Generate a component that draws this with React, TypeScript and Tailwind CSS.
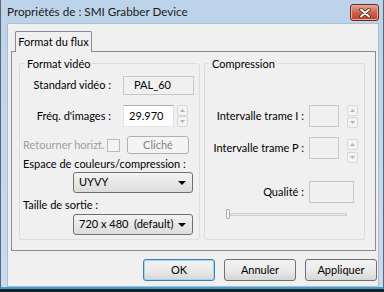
import React from 'react';

function Spin({ gap = 0 }: { gap?: number }) {
  return (
    <div className='flex flex-col' style={{ gap }}>
      {['up', 'down'].map((d) => (
        <div
          key={d}
          className='w-[11px] h-[11px] border border-[#d9d9d9] bg-[#f4f4f4] rounded-[2px] flex items-center justify-center'
        >
          <svg width='5' height='3' viewBox='0 0 5 3'>
            {d === 'up' ? <path d='M0 3 L2.5 0 L5 3 Z' fill='#b4b4b4' /> : <path d='M0 0 L2.5 3 L5 0 Z' fill='#b4b4b4' />}
          </svg>
        </div>
      ))}
    </div>
  );
}

function Select({ value }: { value: string }) {
  return (
    <div className='w-[120px] h-[21px] ml-[53px] border border-[#707070] rounded-[3px] bg-gradient-to-b from-[#f3f3f3] to-[#dcdcdc] flex items-center justify-between pl-[5px] pr-[6px] text-black whitespace-pre'>
      <span>{value}</span>
      <svg width='8' height='4' viewBox='0 0 8 4'>
        <path d='M0 0 L8 0 L4 4 Z' fill='#000' />
      </svg>
    </div>
  );
}

function Button({ label, isDefault }: { label: string; isDefault?: boolean }) {
  return (
    <div
      className={
        'w-[72px] h-[22px] rounded-[3px] border flex items-center justify-center text-black bg-gradient-to-b from-[#f2f2f2] via-[#ebebeb] to-[#d6d6d6] ' +
        (isDefault ? 'border-[#3c7fb1] shadow-[inset_0_0_0_1px_#9fd7f3]' : 'border-[#707070]')
      }
    >
      {label}
    </div>
  );
}

function Group({ title, width, children }: { title: string; width: number; children: React.ReactNode }) {
  return (
    <fieldset className='border border-[#d5dfe5] rounded-[3px] h-[184px] px-0' style={{ width }}>
      <legend className='ml-[5px] px-[2px] leading-[15px] text-black'>{title}</legend>
      {children}
    </fieldset>
  );
}

export default function App() {
  return (
    <div className="w-[384px] h-[292px] bg-[#1b1f24] overflow-hidden text-[11px] whitespace-nowrap font-['Lato','Liberation_Sans',sans-serif]">
      <div className='h-[289px] flex flex-col bg-gradient-to-b from-[#bdd3ea] to-[#c9dbee] border-l border-r border-[#56687a] border-b-[2px] border-b-[#3ba3d4]'>
        {/* title bar */}
        <div className='h-[23px] flex items-center pl-[6px] pr-[4px]'>
          <span className='text-[#1a1a1a] text-[11.7px] mt-[1px]'>Propriétés de : SMI Grabber Device</span>
          <div className='ml-auto mt-[2px] w-[29px] h-[17px] rounded-[3px] border border-[#6b2a20] bg-gradient-to-b from-[#e4a394] via-[#d0624d] to-[#c13e25] flex items-center justify-center shadow-[inset_0_0_0_1px_#e9a99b]'>
            <svg width='12' height='10' viewBox='0 0 12 10'>
              <path d='M2 1.5 L10 8.5 M10 1.5 L2 8.5' stroke='#3a1a14' strokeWidth='3.4' strokeLinecap='round' />
              <path d='M2 1.5 L10 8.5 M10 1.5 L2 8.5' stroke='#fff' strokeWidth='2' strokeLinecap='round' />
            </svg>
          </div>
        </div>

        {/* client area */}
        <div className='flex-1 ml-[6px] mr-[4px] bg-[#f0f0f0] border border-[#a8bfd6] pt-[7px] flex flex-col'>
          {/* tab strip */}
          <div className='pl-[5px] flex'>
            <div className='ml-[2px] w-[77px] h-[21px] -mb-px z-10 relative bg-[#f0f0f0] border border-b-0 border-[#898c95] rounded-t-[2px] flex items-center justify-center text-black'>
              Format du flux
            </div>
          </div>
          <div className='ml-[3px] w-[365px] h-[200px] border border-[#898c95] bg-[#f0f0f0] pl-[7px] pt-[4px] flex gap-[4px]'>
            <Group title='Format vidéo' width={181}>
              <div className='flex flex-col'>
                <div className='mt-[5px] h-[19px] flex items-center'>
                  <span className='w-[91px] text-right text-black'>Standard vidéo :</span>
                  <div className='ml-[12px] w-[71px] h-[19px] border border-[#c8c8c8] bg-[#f0f0f0] flex items-center pl-[10px] text-black'>
                    PAL_60
                  </div>
                </div>
                <div className='mt-[10px] h-[22px] flex items-center'>
                  <span className='w-[91px] text-right text-black'>Fréq. d'images :</span>
                  <div className='ml-[12px] w-[51px] h-[22px] border border-[#abadb3] border-l-[#e2e3ea] border-r-[#dbdfe6] border-b-[#e3e9ef] bg-white flex items-center pl-[5px] text-black'>
                    29.970
                  </div>
                  <div className='ml-[3px]'>
                    <Spin />
                  </div>
                </div>
                <div className='mt-[9px] h-[18px] flex items-center pl-[3px]'>
                  <span className='w-[84px] text-[#a0a0a0]'>Retourner horizt.</span>
                  <div className='w-[13px] h-[13px] border border-[#bcbcbc] bg-[#f4f4f4]' />
                  <div className='ml-[7px] w-[62px] h-[18px] border border-[#adb2b5] rounded-[3px] bg-[#f4f4f4] flex items-center justify-center text-[#838383]'>
                    Cliché
                  </div>
                </div>
                <div className='mt-[2px] h-[15px] pl-[3px] leading-[15px] text-black'>Espace de couleurs/compression :</div>
                <div className='mt-[1px]'>
                  <Select value='UYVY' />
                </div>
                <div className='mt-[4px] h-[15px] pl-[3px] leading-[15px] text-black'>Taille de sortie :</div>
                <div className='mt-[2px]'>
                  <Select value='720 x 480  (default)' />
                </div>
              </div>
            </Group>
            <Group title='Compression' width={161}>
              <div className='flex flex-col'>
                <div className='mt-[34px] h-[22px] flex items-center'>
                  <span className='w-[99px] text-right text-black'>Intervalle trame I :</span>
                  <div className='ml-[5px] w-[30px] h-[22px] border border-[#c9c9c9] bg-[#f0f0f0]' />
                  <div className='ml-[8px]'>
                    <Spin gap={1} />
                  </div>
                </div>
                <div className='mt-[10px] h-[22px] flex items-center'>
                  <span className='w-[99px] text-right text-black'>Intervalle trame P :</span>
                  <div className='ml-[5px] w-[30px] h-[22px] border border-[#c9c9c9] bg-[#f0f0f0]' />
                  <div className='ml-[8px] mt-[6px]'>
                    <Spin gap={2} />
                  </div>
                </div>
                <div className='mt-[22px] h-[22px] flex items-center'>
                  <span className='w-[99px] text-right text-black'>Qualité :</span>
                  <div className='ml-[5px] w-[45px] h-[22px] border border-[#c9c9c9] bg-[#f0f0f0]' />
                </div>
                <div className='mt-[6px] ml-[21px] w-[121px] h-[10px] flex items-center'>
                  <div className='w-[4px] h-[10px] border border-[#b0b0b0] bg-[#f4f4f4] rounded-[1px]' />
                  <div className='flex-1 h-[3px] border border-[#d0d0d0] bg-[#e7eaea]' />
                </div>
              </div>
            </Group>
          </div>

          {/* buttons */}
          <div className='mt-[8px] flex justify-end gap-[9px] w-[369px]'>
            <Button label='OK' isDefault />
            <Button label='Annuler' />
            <Button label='Appliquer' />
          </div>
        </div>
      </div>
    </div>
  );
}
